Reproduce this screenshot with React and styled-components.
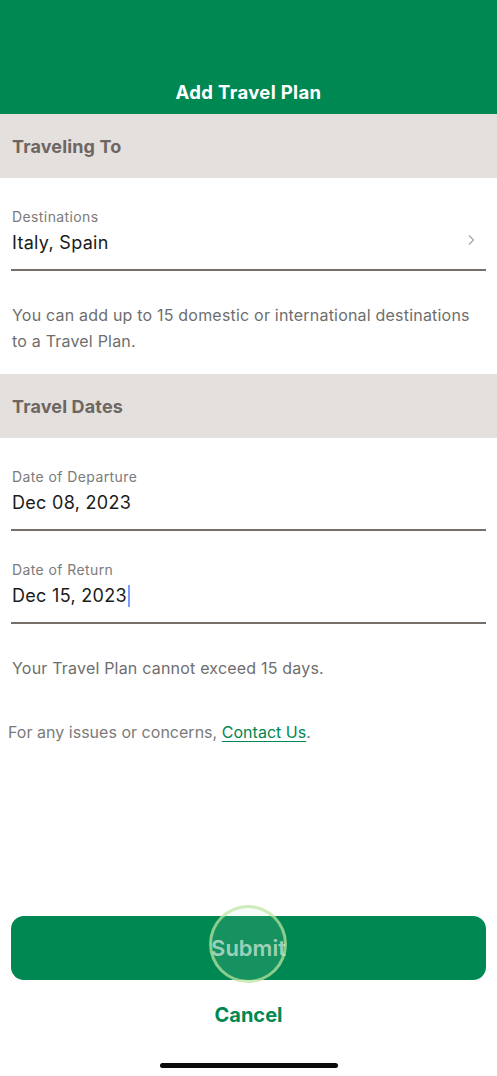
import React from "react";
import styled, { createGlobalStyle } from "styled-components";

const Global = createGlobalStyle`
  html, body { margin: 0; padding: 0; background: #fff; }
  body { font-family: Inter, "Open Sans", sans-serif; -webkit-font-smoothing: antialiased; }
  * { box-sizing: border-box; }
`;

const Screen = styled.div`
  width: 497px;
  height: 1076px;
  display: flex;
  flex-direction: column;
  background: #fff;
  overflow: hidden;
`;

const Header = styled.header`
  height: 114px;
  background: #008852;
  display: flex;
  align-items: flex-end;
  justify-content: center;
  padding-bottom: 11px;
`;

const Title = styled.h1`
  margin: 0;
  color: #fff;
  font-size: 18.5px;
  font-weight: 700;
  line-height: 22px;
  letter-spacing: 0.35px;
`;

const SectionHeader = styled.div`
  height: 64px;
  background: #e4e0dd;
  display: flex;
  align-items: center;
  padding: 0 12px;
  color: #6d6662;
  font-size: 18px;
  font-weight: 700;
  letter-spacing: 0.15px;
`;

const Field = styled.div`
  margin: 0 11px;
  padding-top: 30px;
  padding-bottom: 14px;
  border-bottom: 2px solid #776f6a;
  display: flex;
  align-items: flex-end;
`;

const FieldBody = styled.div`
  flex: 1;
  display: flex;
  flex-direction: column;
  gap: 5px;
  padding-left: 1px;
`;

const Label = styled.span`
  font-size: 14px;
  line-height: 18px;
  color: #7b7b7b;
  letter-spacing: 0.4px;
`;

const Value = styled.span`
  font-size: 18px;
  line-height: 24px;
  color: #1b1b1b;
  letter-spacing: 0.3px;
  display: inline-flex;
  align-items: center;
`;

const Cursor = styled.span`
  display: inline-block;
  width: 2px;
  height: 22px;
  background: #7b9cff;
  margin-left: 1px;
`;

const Chevron = styled.svg`
  width: 10px;
  height: 12px;
  margin: 0 10px 9px 0;
`;

const Help = styled.p`
  margin: ${(p) => p.$margin};
  padding: 0 ${(p) => p.$pad}px;
  font-size: 16px;
  line-height: 26px;
  letter-spacing: ${(p) => (p.$light ? "0.02px" : "0.2px")};
  color: ${(p) => (p.$light ? "#7a7a7a" : "#6e6e6e")};
`;

const Link = styled.a`
  color: #008852;
  text-decoration: underline;
  text-underline-offset: 3px;
`;

const Spacer = styled.div`
  flex: 1;
`;

const Actions = styled.div`
  display: flex;
  flex-direction: column;
  align-items: center;
  padding: 0 11px;
`;

const SubmitButton = styled.button`
  position: relative;
  width: 100%;
  height: 64px;
  border: none;
  border-radius: 13px;
  background: #008852;
  color: rgba(255, 255, 255, 0.62);
  font-family: inherit;
  font-size: 22px;
  font-weight: 600;
  display: flex;
  align-items: center;
  justify-content: center;
`;

const TapRing = styled.span`
  position: absolute;
  left: 50%;
  top: 50%;
  width: 78px;
  height: 78px;
  margin: -43px 0 0 -40px;
  border-radius: 50%;
  border: 3px solid rgba(190, 230, 160, 0.7);
  background: rgba(180, 225, 200, 0.12);
`;

const CancelButton = styled.button`
  margin-top: 21px;
  border: none;
  background: none;
  color: #008852;
  font-family: inherit;
  font-size: 20px;
  font-weight: 700;
  line-height: 26px;
`;

const HomeIndicator = styled.div`
  width: 178px;
  height: 5px;
  border-radius: 3px;
  background: #0b0b0b;
  margin: 34px auto 8px;
`;

export default function App() {
  return (
    <>
      <Global />
      <Screen>
        <Header>
          <Title>Add Travel Plan</Title>
        </Header>
        <SectionHeader>Traveling To</SectionHeader>
        <Field>
          <FieldBody>
            <Label>Destinations</Label>
            <Value>Italy, Spain</Value>
          </FieldBody>
          <Chevron viewBox="0 0 10 12">
            <path d="M3 1.5 L7.5 6 L3 10.5" fill="none" stroke="#a0a0a0" strokeWidth="1.1" />
          </Chevron>
        </Field>
        <Help $margin="31px 0 20px" $pad={12}>
          You can add up to 15 domestic or international destinations to a Travel Plan.
        </Help>
        <SectionHeader>Travel Dates</SectionHeader>
        <Field>
          <FieldBody>
            <Label>Date of Departure</Label>
            <Value>Dec 08, 2023</Value>
          </FieldBody>
        </Field>
        <Field>
          <FieldBody>
            <Label>Date of Return</Label>
            <Value>
              Dec 15, 2023
              <Cursor />
            </Value>
          </FieldBody>
        </Field>
        <Help $margin="31px 0 0" $pad={12}>
          Your Travel Plan cannot exceed 15 days.
        </Help>
        <Help $margin="38px 0 0" $pad={8} $light>
          For any issues or concerns, <Link href="#">Contact Us</Link>.
        </Help>
        <Spacer />
        <Actions>
          <SubmitButton>
            <TapRing />
            Submit
          </SubmitButton>
          <CancelButton>Cancel</CancelButton>
        </Actions>
        <HomeIndicator />
      </Screen>
    </>
  );
}
